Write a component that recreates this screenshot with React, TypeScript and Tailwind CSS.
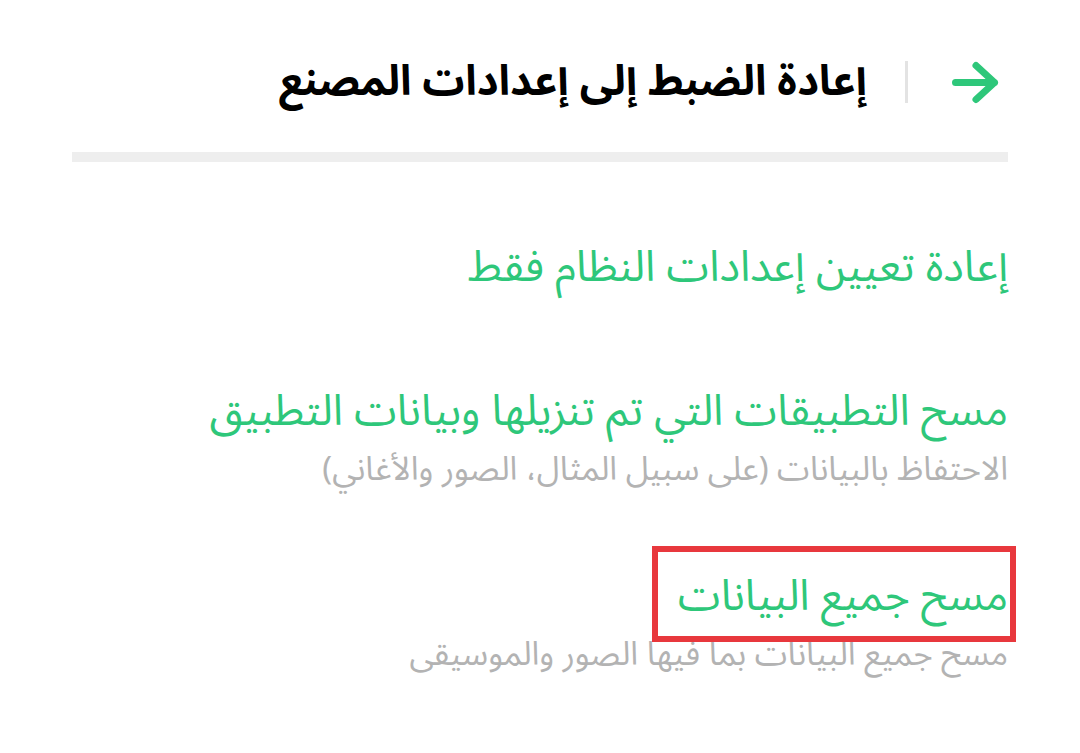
const font = { fontFamily: '"Noto Sans Arabic", "Noto Sans", "DejaVu Sans", sans-serif' };

interface OptionProps {
  title: string;
  subtitle?: string;
  highlighted?: boolean;
}

function Option({ title, subtitle, highlighted }: OptionProps) {
  return (
    <div>
      <div className="relative inline-block">
        <h2 className="text-[43px] leading-[56px] text-[#2ec77a]">{title}</h2>
        {highlighted && (
          <div className="pointer-events-none absolute -top-[23px] -bottom-[17px] -right-[8px] -left-[26px] border-[6px] border-[#e8383d]" />
        )}
      </div>
      {subtitle && (
        <p className="mt-[8px] text-[33px] leading-[44px] text-[#b3b3b3]">{subtitle}</p>
      )}
    </div>
  );
}

export default function App() {
  return (
    <div dir="rtl" style={font} className="min-h-[753px] w-[1080px] bg-white px-[72px]">
      {/* header */}
      <div className="flex h-[152px] items-center pt-[12px] pr-[8px]">
        <svg width="50" height="48" viewBox="0 0 50 48" fill="none" className="shrink-0">
          <path
            d="M5.5 24.5H44.5M26 7.5L44.5 24.5L26 41.5"
            stroke="#2ec77a"
            strokeWidth="7"
            strokeLinecap="round"
            strokeLinejoin="round"
          />
        </svg>
        <div className="mr-[42px] ml-[38px] h-[42px] w-[3px] bg-[#e3e3e3]" />
        <h1 className="text-[42px] font-bold leading-[56px] text-black">إعادة الضبط إلى إعدادات المصنع</h1>
      </div>
      <div className="h-[10px] bg-[#eeeeee]" />

      <div className="flex flex-col pt-[78px]">
        <Option title="إعادة تعيين إعدادات النظام فقط" />
        <div className="mt-[88px]">
          <Option
            title="مسح التطبيقات التي تم تنزيلها وبيانات التطبيق"
            subtitle="الاحتفاظ بالبيانات (على سبيل المثال، الصور والأغاني)"
          />
        </div>
        <div className="mt-[77px]">
          <Option
            title="مسح جميع البيانات"
            subtitle="مسح جميع البيانات بما فيها الصور والموسيقى"
            highlighted
          />
        </div>
      </div>
    </div>
  );
}
